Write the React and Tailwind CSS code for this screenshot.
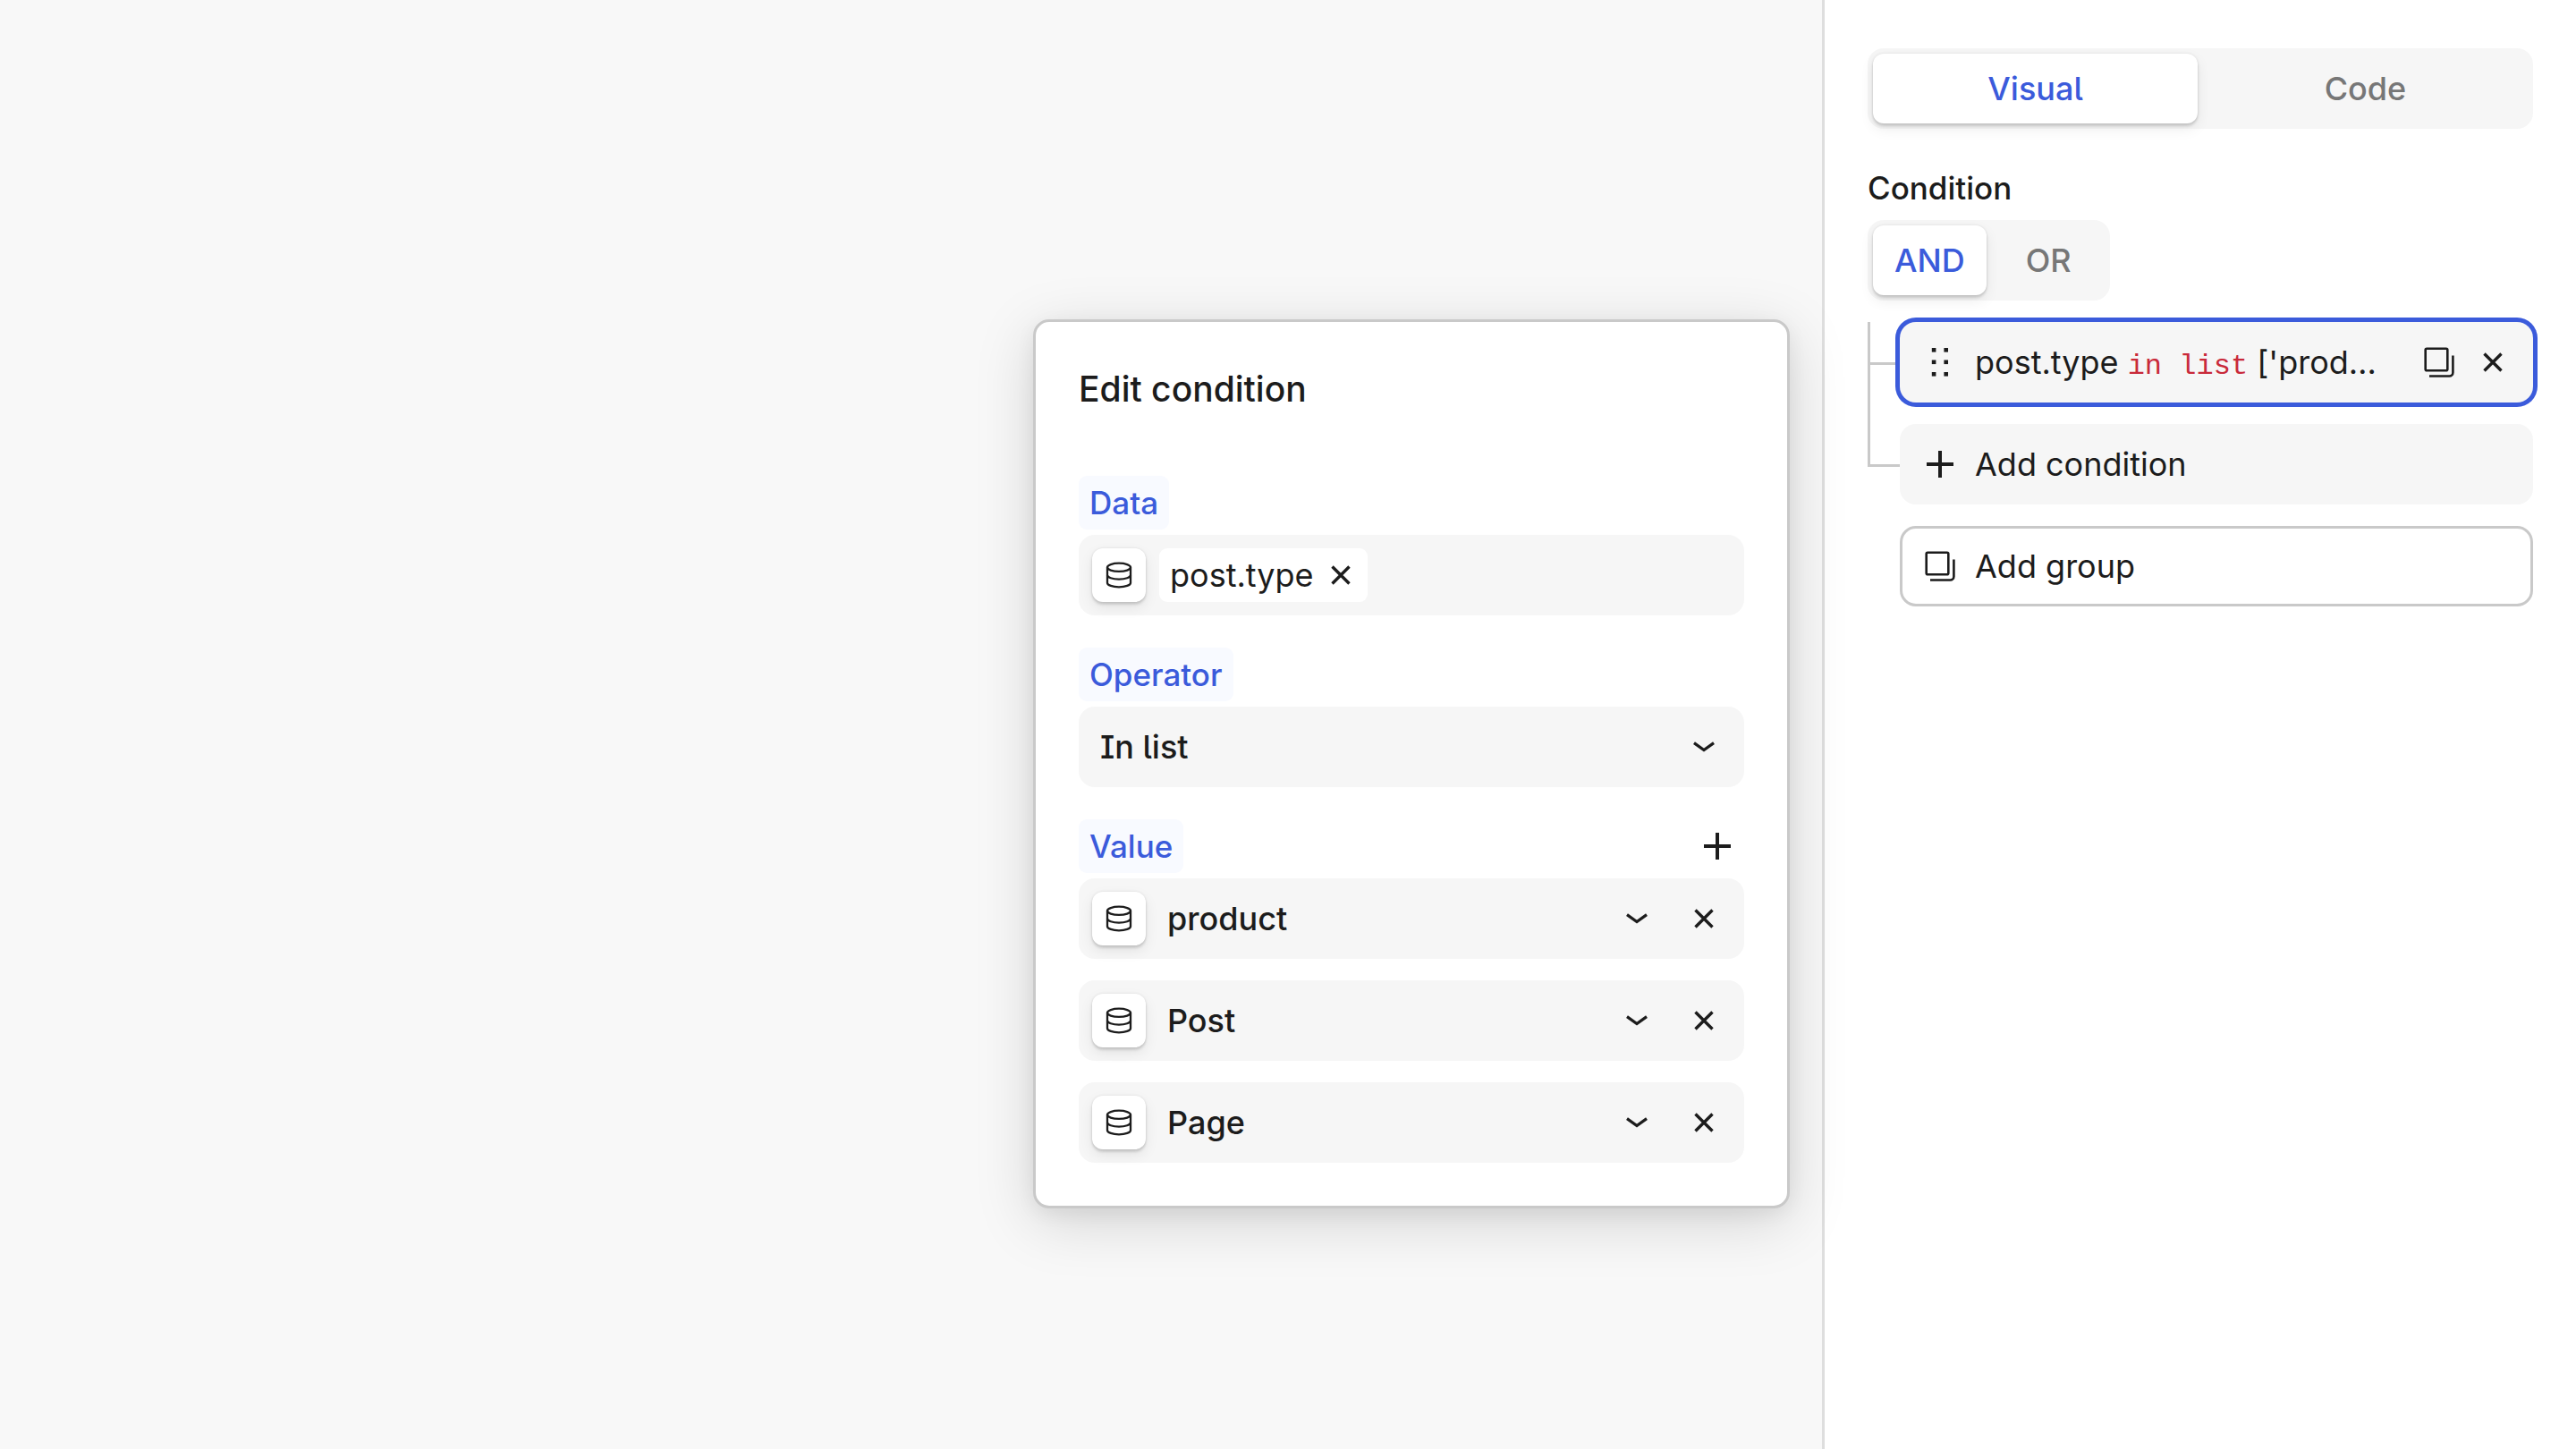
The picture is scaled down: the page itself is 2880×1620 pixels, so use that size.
import { useState } from "react";

const FIELD = "flex h-[90px] items-center rounded-[18px] bg-[#f6f6f6]";
const ICON_BUTTON = "flex size-[60px] shrink-0 items-center justify-center";
const RAISED =
  "bg-white shadow-[0_0_3px_rgba(0,0,0,0.1),0_3px_3px_rgba(0,0,0,0.13),0_6px_15px_rgba(0,0,0,0.08)]";

const PREVIEW_LENGTH = 6;

function preview(list) {
  const text = `[${list.map((item) => `'${item}'`).join(", ")}]`;
  return text.length > PREVIEW_LENGTH ? `${text.slice(0, PREVIEW_LENGTH)}…` : text;
}

function CloseIcon() {
  return (
    <svg width="24" height="24" viewBox="0 0 24 24" fill="none" stroke="currentColor" strokeWidth="3.4">
      <path d="M2.5 2.5l19 19M21.5 2.5l-19 19" />
    </svg>
  );
}

function PlusIcon() {
  return (
    <svg width="30" height="30" viewBox="0 0 30 30" fill="none" stroke="currentColor" strokeWidth="4">
      <path d="M15 0v30M0 15h30" />
    </svg>
  );
}

function ChevronIcon() {
  return (
    <svg width="26" height="14" viewBox="0 0 26 14" fill="none" stroke="currentColor" strokeWidth="3.2">
      <path d="M2 2.6l11 8 11-8" />
    </svg>
  );
}

function DatabaseIcon() {
  return (
    <svg width="30" height="30" viewBox="0 0 30 30" fill="none" stroke="currentColor" strokeWidth="2.3">
      <ellipse cx="15" cy="6.3" rx="13" ry="4.6" />
      <path d="M2 6.3v17.4c0 2.5 5.8 4.6 13 4.6s13-2.1 13-4.6V6.3" />
      <path d="M2 15c0 2.5 5.8 4.6 13 4.6S28 17.5 28 15" />
    </svg>
  );
}

function GroupIcon() {
  return (
    <svg width="34" height="34" viewBox="0 0 34 34" fill="none" stroke="currentColor" strokeWidth="2.6">
      <rect x="1.7" y="1.7" width="24.6" height="24.6" rx="1.5" />
      <path d="M32.4 9.5v19a4 4 0 0 1-4 4H6" />
    </svg>
  );
}

function DragIcon() {
  return (
    <svg width="20" height="32" viewBox="0 0 20 32" fill="currentColor">
      {[0, 13.5, 27].map((y) => (
        <g key={y}>
          <rect x="0.8" y={y} width="4.6" height="4.6" />
          <rect x="14.4" y={y} width="4.6" height="4.6" />
        </g>
      ))}
    </svg>
  );
}

function Segmented({ name, options, value, onChange, className = "" }) {
  return (
    <div role="group" aria-label={name} className={`grid grid-cols-2 gap-1.5 rounded-[18px] bg-[#f6f6f6] p-1.5 ${className}`}>
      {options.map((option) => (
        <button
          key={option}
          aria-pressed={option === value}
          onClick={() => onChange(option)}
          className={`h-[78px] rounded-xl px-6 font-medium [font-feature-settings:'cv05'] ${
            option === value ? `${RAISED} text-[#3b5bdb]` : "text-[#777]"
          }`}
        >
          {option}
        </button>
      ))}
    </div>
  );
}

function FieldLabel({ htmlFor, children }) {
  return (
    <label
      htmlFor={htmlFor}
      className="flex h-[60px] w-fit items-center rounded-[9px] bg-[#f8faff] px-3 text-[35px] font-medium text-[#3b5bdb]"
    >
      {children}
    </label>
  );
}

function SourceButton({ id }) {
  return (
    <button id={id} aria-label="Choose data source" className={`${ICON_BUTTON} ${RAISED} rounded-xl`}>
      <DatabaseIcon />
    </button>
  );
}

function EditCondition() {
  const [values, setValues] = useState(["product", "Post", "Page"]);

  const removeValue = (index) => {
    setValues((prev) => prev.filter((_, i) => i !== index));
  };

  const changeValue = (index, next) => {
    setValues((prev) => prev.map((value, i) => (i === index ? next : value)));
  };

  return (
    <section className="relative z-10 w-[846px] rounded-[18px] border-3 border-[#c9c9c9] bg-white p-12 shadow-[0_6px_21px_rgba(0,0,0,0.06),0_15px_66px_rgba(0,0,0,0.15)]">
      <h2 className="mb-[70px] text-[39px] leading-[54px] font-medium">Edit condition</h2>

      <div className="flex flex-col gap-9">
        <div className="flex flex-col gap-1.5">
          <FieldLabel htmlFor="data">Data</FieldLabel>
          <div className={`${FIELD} gap-[15px] px-[15px]`}>
            <SourceButton id="data" />
            <div className="flex h-[60px] items-center rounded-[9px] bg-white pl-3">
              post.type
              <button aria-label="Remove post.type" className={ICON_BUTTON}>
                <CloseIcon />
              </button>
            </div>
          </div>
        </div>

        <div className="flex flex-col gap-1.5">
          <FieldLabel htmlFor="operator">Operator</FieldLabel>
          <div className={`${FIELD} relative`}>
            <select
              id="operator"
              className="h-full w-full appearance-none rounded-[18px] pl-6 font-medium [font-feature-settings:'cv05','cv08']"
            >
              <option>In list</option>
              <option>Not in list</option>
            </select>
            <span className={`${ICON_BUTTON} pointer-events-none absolute right-[15px]`}>
              <ChevronIcon />
            </span>
          </div>
        </div>

        <div className="flex flex-col gap-1.5">
          <div className="flex items-center justify-between">
            <FieldLabel htmlFor="value-0">Value</FieldLabel>
            <button
              aria-label="Add value"
              className={ICON_BUTTON}
              onClick={() => setValues((prev) => [...prev, ""])}
            >
              <PlusIcon />
            </button>
          </div>
          <div className="flex flex-col gap-6">
            {values.map((value, i) => (
              <div key={i} className={`${FIELD} gap-[15px] px-[15px]`}>
                <SourceButton />
                <input
                  id={`value-${i}`}
                  aria-label={`Value ${i + 1}`}
                  value={value}
                  onChange={(e) => changeValue(i, e.target.value)}
                  className="h-full min-w-0 flex-1 pl-[9px] font-medium"
                />
                <button aria-label="Show options" className={ICON_BUTTON}>
                  <ChevronIcon />
                </button>
                <button aria-label="Remove value" className={ICON_BUTTON} onClick={() => removeValue(i)}>
                  <CloseIcon />
                </button>
              </div>
            ))}
          </div>
        </div>
      </div>
    </section>
  );
}

function Branch({ last }) {
  return (
    <div className="flex w-9 shrink-0 flex-col self-stretch">
      <div className="h-12 border-b-3 border-l-3 border-[#c9c9c9]" />
      {!last && <div className="flex-1 border-l-3 border-[#c9c9c9]" />}
    </div>
  );
}

function ConditionPanel() {
  const [mode, setMode] = useState("Visual");
  const [join, setJoin] = useState("AND");

  return (
    <aside className="w-[843px] shrink-0 border-l-3 border-[#dedede] bg-white px-12 pt-[54px]">
      <Segmented name="Editor mode" options={["Visual", "Code"]} value={mode} onChange={setMode} />

      <h3 className="mt-[39px] text-[35px] leading-[54px] font-medium">Condition</h3>
      <Segmented
        name="Join conditions with"
        options={["AND", "OR"]}
        value={join}
        onChange={setJoin}
        className="mt-[9px] w-fit"
      />

      <div className="mt-6 flex flex-col">
        <div className="flex">
          <Branch />
          <div className="min-w-0 flex-1 pb-6">
            <div className={`${FIELD} px-[15px] ring-5 ring-[#3b5bdb]`}>
              <button aria-label="Drag condition" className={ICON_BUTTON}>
                <DragIcon />
              </button>
              <p className="ml-[9px] flex-1 whitespace-nowrap">
                post.type{" "}
                <code className="font-['Liberation_Mono',monospace] text-[32px] leading-none text-[#c92a3a]">in list</code>{" "}
                {preview(["product", "Post", "Page"])}
              </p>
              <button aria-label="Duplicate condition" className={ICON_BUTTON}>
                <GroupIcon />
              </button>
              <button aria-label="Remove condition" className={ICON_BUTTON}>
                <CloseIcon />
              </button>
            </div>
          </div>
        </div>

        <div className="flex">
          <Branch last />
          <button className={`${FIELD} flex-1 gap-[9px] px-[15px]`}>
            <span className={ICON_BUTTON}>
              <PlusIcon />
            </span>
            Add condition
          </button>
        </div>

        <button className="mt-6 ml-9 flex h-[90px] items-center gap-[9px] rounded-[18px] border-3 border-[#c9c9c9] px-3">
          <span className={ICON_BUTTON}>
            <GroupIcon />
          </span>
          Add group
        </button>
      </div>
    </aside>
  );
}

export default function App() {
  return (
    <div className="flex min-h-screen bg-[#f8f8f8] font-[Inter,sans-serif] text-[36px] leading-[54px] text-[#1c1c1c]">
      <main className="flex flex-1 items-start justify-end pt-[357px] pr-9">
        <EditCondition />
      </main>
      <ConditionPanel />
    </div>
  );
}
